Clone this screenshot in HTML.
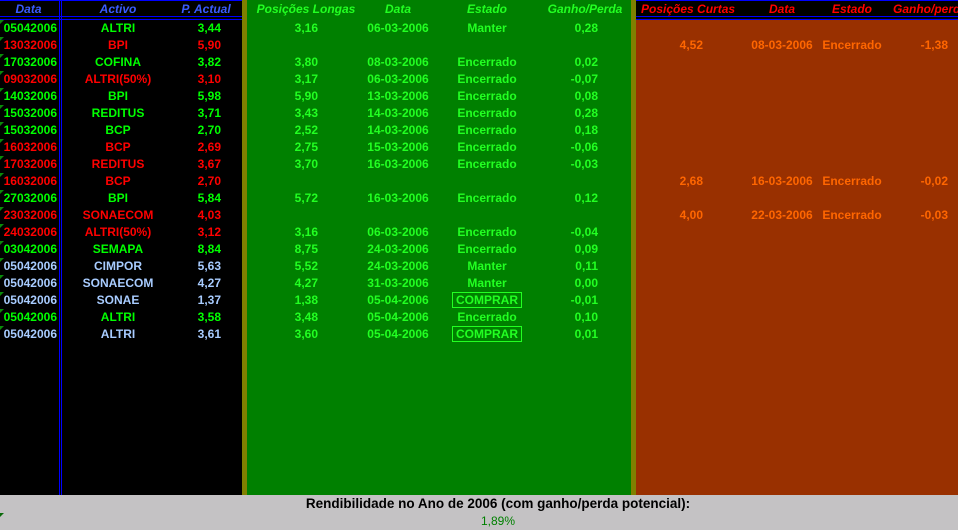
<!DOCTYPE html>
<html><head><meta charset="utf-8"><style>
*{margin:0;padding:0;box-sizing:border-box}
body{width:958px;height:530px;overflow:hidden;background:#c4c2c4;position:relative;font-family:"Liberation Sans",Arial,sans-serif;font-size:12px;font-weight:bold}
.a{position:absolute}
.r{position:absolute;left:0;width:958px;height:17px;line-height:17px}
.r div{position:absolute;top:0;white-space:nowrap}
.c0{left:0;width:57px;text-align:right}
.c1{left:62px;width:112px;text-align:center}
.c2{left:160px;width:61px;text-align:right}
.c3{left:260px;width:58px;text-align:right}
.c4{left:348px;width:100px;text-align:center}
.c5{left:437px;width:100px;text-align:center}
.c6{left:540px;width:58px;text-align:right}
.c7{left:640px;width:63px;text-align:right}
.c8{left:732px;width:100px;text-align:center}
.c9{left:802px;width:100px;text-align:center}
.c10{left:880px;width:68px;text-align:right}
.g{color:#00ff00}.rd{color:#ff0000}.b{color:#a8ccff}.o{color:#ff6600}
.L{color:#22ff22}
.h{font-style:italic;color:#3a5cff}
.box{border:1px solid #22ff22;line-height:17px;padding:0 3px}
.t{position:absolute;left:0;width:0;height:0;border-top:4px solid #0a8a0a;border-right:4px solid transparent}
</style></head><body>
<div class="a" style="left:0;top:0;width:958px;height:495px;background:#000"></div>
<div class="a" style="left:242px;top:0;width:5px;height:495px;background:#808000"></div>
<div class="a" style="left:247px;top:0;width:384px;height:495px;background:#008000"></div>
<div class="a" style="left:631px;top:0;width:5px;height:495px;background:#808000"></div>
<div class="a" style="left:636px;top:19px;width:322px;height:476px;background:#993000"></div>
<div class="a" style="left:0;top:0;width:242px;height:1px;background:#0000ff"></div>
<div class="a" style="left:636px;top:0;width:322px;height:1px;background:#0000ff"></div>
<div class="a" style="left:0;top:16px;width:242px;height:1px;background:#0000ff"></div>
<div class="a" style="left:0;top:19px;width:242px;height:1px;background:#0000ff"></div>
<div class="a" style="left:636px;top:16px;width:322px;height:1px;background:#0000ff"></div>
<div class="a" style="left:636px;top:19px;width:322px;height:1px;background:#0000ff"></div>
<div class="a" style="left:59px;top:0;width:1px;height:495px;background:#0000ff"></div>
<div class="a" style="left:61px;top:0;width:1px;height:495px;background:#0000ff"></div>

<div class="r" style="top:1px;font-style:italic">
<div class="h" style="left:0;width:57px;text-align:center">Data</div>
<div class="h" style="left:62px;width:112px;text-align:center">Activo</div>
<div class="h" style="left:170px;width:72px;text-align:center">P. Actual</div>
<div class="L" style="left:250px;width:112px;text-align:center">Posições Longas</div>
<div class="L" style="left:348px;width:100px;text-align:center">Data</div>
<div class="L" style="left:437px;width:100px;text-align:center">Estado</div>
<div class="L" style="left:540px;width:90px;text-align:center">Ganho/Perda</div>
<div class="rd" style="left:641px;width:102px;text-align:left">Posições Curtas</div>
<div class="rd" style="left:732px;width:100px;text-align:center">Data</div>
<div class="rd" style="left:802px;width:100px;text-align:center">Estado</div>
<div class="rd" style="left:893px;text-align:left">Ganho/perda</div>
</div>

<div class="r" style="top:20px"><span class="t"></span><div class="c0 g">05042006</div><div class="c1 g">ALTRI</div><div class="c2 g">3,44</div><div class="c3 L">3,16</div><div class="c4 L">06-03-2006</div><div class="c5 L">Manter</div><div class="c6 L">0,28</div></div>
<div class="r" style="top:37px"><span class="t"></span><div class="c0 rd">13032006</div><div class="c1 rd">BPI</div><div class="c2 rd">5,90</div><div class="c7 o">4,52</div><div class="c8 o">08-03-2006</div><div class="c9 o">Encerrado</div><div class="c10 o">-1,38</div></div>
<div class="r" style="top:54px"><span class="t"></span><div class="c0 g">17032006</div><div class="c1 g">COFINA</div><div class="c2 g">3,82</div><div class="c3 L">3,80</div><div class="c4 L">08-03-2006</div><div class="c5 L">Encerrado</div><div class="c6 L">0,02</div></div>
<div class="r" style="top:71px"><span class="t"></span><div class="c0 rd">09032006</div><div class="c1 rd">ALTRI(50%)</div><div class="c2 rd">3,10</div><div class="c3 L">3,17</div><div class="c4 L">06-03-2006</div><div class="c5 L">Encerrado</div><div class="c6 L">-0,07</div></div>
<div class="r" style="top:88px"><span class="t"></span><div class="c0 g">14032006</div><div class="c1 g">BPI</div><div class="c2 g">5,98</div><div class="c3 L">5,90</div><div class="c4 L">13-03-2006</div><div class="c5 L">Encerrado</div><div class="c6 L">0,08</div></div>
<div class="r" style="top:105px"><span class="t"></span><div class="c0 g">15032006</div><div class="c1 g">REDITUS</div><div class="c2 g">3,71</div><div class="c3 L">3,43</div><div class="c4 L">14-03-2006</div><div class="c5 L">Encerrado</div><div class="c6 L">0,28</div></div>
<div class="r" style="top:122px"><span class="t"></span><div class="c0 g">15032006</div><div class="c1 g">BCP</div><div class="c2 g">2,70</div><div class="c3 L">2,52</div><div class="c4 L">14-03-2006</div><div class="c5 L">Encerrado</div><div class="c6 L">0,18</div></div>
<div class="r" style="top:139px"><span class="t"></span><div class="c0 rd">16032006</div><div class="c1 rd">BCP</div><div class="c2 rd">2,69</div><div class="c3 L">2,75</div><div class="c4 L">15-03-2006</div><div class="c5 L">Encerrado</div><div class="c6 L">-0,06</div></div>
<div class="r" style="top:156px"><span class="t"></span><div class="c0 rd">17032006</div><div class="c1 rd">REDITUS</div><div class="c2 rd">3,67</div><div class="c3 L">3,70</div><div class="c4 L">16-03-2006</div><div class="c5 L">Encerrado</div><div class="c6 L">-0,03</div></div>
<div class="r" style="top:173px"><span class="t"></span><div class="c0 rd">16032006</div><div class="c1 rd">BCP</div><div class="c2 rd">2,70</div><div class="c7 o">2,68</div><div class="c8 o">16-03-2006</div><div class="c9 o">Encerrado</div><div class="c10 o">-0,02</div></div>
<div class="r" style="top:190px"><span class="t"></span><div class="c0 g">27032006</div><div class="c1 g">BPI</div><div class="c2 g">5,84</div><div class="c3 L">5,72</div><div class="c4 L">16-03-2006</div><div class="c5 L">Encerrado</div><div class="c6 L">0,12</div></div>
<div class="r" style="top:207px"><span class="t"></span><div class="c0 rd">23032006</div><div class="c1 rd">SONAECOM</div><div class="c2 rd">4,03</div><div class="c7 o">4,00</div><div class="c8 o">22-03-2006</div><div class="c9 o">Encerrado</div><div class="c10 o">-0,03</div></div>
<div class="r" style="top:224px"><span class="t"></span><div class="c0 rd">24032006</div><div class="c1 rd">ALTRI(50%)</div><div class="c2 rd">3,12</div><div class="c3 L">3,16</div><div class="c4 L">06-03-2006</div><div class="c5 L">Encerrado</div><div class="c6 L">-0,04</div></div>
<div class="r" style="top:241px"><span class="t"></span><div class="c0 g">03042006</div><div class="c1 g">SEMAPA</div><div class="c2 g">8,84</div><div class="c3 L">8,75</div><div class="c4 L">24-03-2006</div><div class="c5 L">Encerrado</div><div class="c6 L">0,09</div></div>
<div class="r" style="top:258px"><span class="t"></span><div class="c0 b">05042006</div><div class="c1 b">CIMPOR</div><div class="c2 b">5,63</div><div class="c3 L">5,52</div><div class="c4 L">24-03-2006</div><div class="c5 L">Manter</div><div class="c6 L">0,11</div></div>
<div class="r" style="top:275px"><span class="t"></span><div class="c0 b">05042006</div><div class="c1 b">SONAECOM</div><div class="c2 b">4,27</div><div class="c3 L">4,27</div><div class="c4 L">31-03-2006</div><div class="c5 L">Manter</div><div class="c6 L">0,00</div></div>
<div class="r" style="top:292px"><span class="t"></span><div class="c0 b">05042006</div><div class="c1 b">SONAE</div><div class="c2 b">1,37</div><div class="c3 L">1,38</div><div class="c4 L">05-04-2006</div><div class="c5 L"><span class="box">COMPRAR</span></div><div class="c6 L">-0,01</div></div>
<div class="r" style="top:309px"><span class="t"></span><div class="c0 g">05042006</div><div class="c1 g">ALTRI</div><div class="c2 g">3,58</div><div class="c3 L">3,48</div><div class="c4 L">05-04-2006</div><div class="c5 L">Encerrado</div><div class="c6 L">0,10</div></div>
<div class="r" style="top:326px"><span class="t"></span><div class="c0 b">05042006</div><div class="c1 b">ALTRI</div><div class="c2 b">3,61</div><div class="c3 L">3,60</div><div class="c4 L">05-04-2006</div><div class="c5 L"><span class="box">COMPRAR</span></div><div class="c6 L">0,01</div></div>

<div class="a" style="left:0;top:496px;width:996px;text-align:center;font-weight:bold;color:#000;line-height:16px;font-size:13.5px">Rendibilidade no Ano de 2006 (com ganho/perda potencial):</div>
<div class="a" style="left:0;top:513px;width:996px;text-align:center;color:#008000;line-height:16px;font-weight:normal">1,89%</div>
<div class="a" style="left:0;top:513px;width:0;height:0;border-top:4px solid #0a6a0a;border-right:4px solid transparent"></div>
</body></html>
